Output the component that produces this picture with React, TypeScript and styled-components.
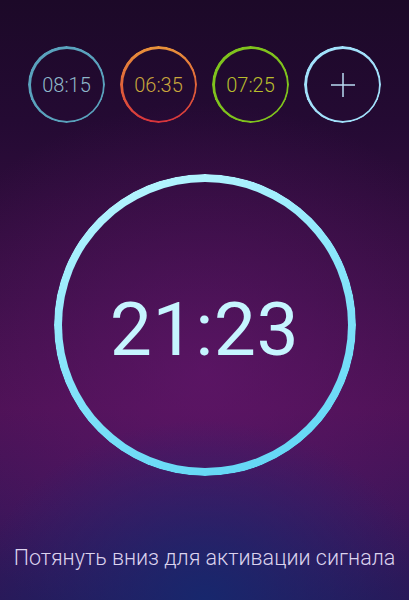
import styled, { createGlobalStyle } from "styled-components";

const GlobalStyle = createGlobalStyle`
  * { box-sizing: border-box; }
  html, body { margin: 0; padding: 0; background: #1e0a2c; }
`;

// 배경: 위는 짙은 보라, 가운데 보라 빛, 아래는 남색
const Screen = styled.div`
  width: 409px;
  height: 600px;
  overflow: hidden;
  display: flex;
  flex-direction: column;
  align-items: center;
  font-family: Roboto, "Noto Sans", sans-serif;
  background:
    radial-gradient(ellipse 55% 30% at 50% 100%, rgba(22, 40, 110, 0.95) 0%, rgba(22, 40, 110, 0) 100%),
    radial-gradient(ellipse 75% 45% at 50% 62%, rgba(110, 25, 120, 0.5) 0%, rgba(110, 25, 120, 0) 100%),
    linear-gradient(180deg, #1c0928 0%, #240a33 20%, #3a0f46 50%, #4a1152 68%, #3b1558 85%, #2a1858 100%);
`;

const AlarmRow = styled.div`
  display: flex;
  justify-content: center;
  gap: 15px;
  padding-top: 46px;
`;

const Ring = styled.div<{ $ring: string; $width: number; $size: number }>`
  position: relative;
  width: ${(p) => p.$size}px;
  height: ${(p) => p.$size}px;
  border-radius: 50%;
  display: flex;
  align-items: center;
  justify-content: center;

  &::before {
    content: "";
    position: absolute;
    inset: 0;
    border-radius: 50%;
    padding: ${(p) => p.$width}px;
    background: ${(p) => p.$ring};
    -webkit-mask: linear-gradient(#000 0 0) content-box, linear-gradient(#000 0 0);
    -webkit-mask-composite: xor;
    mask-composite: exclude;
  }
`;

const AlarmTime = styled.span<{ $color: string }>`
  font-size: 20px;
  line-height: 24px;
  font-weight: 300;
  color: ${(p) => p.$color};
  padding-top: 1px;
`;

const Dial = styled(Ring)`
  margin-top: 51px;
`;

const Clock = styled.span`
  font-size: 75px;
  line-height: 88px;
  color: #c6f5ff;
  padding-top: 7px;
  letter-spacing: 0.5px;
`;

const Hint = styled.p`
  margin: 70px 0 0;
  font-size: 21.5px;
  line-height: 24px;
  font-weight: 300;
  color: #dcd3ee;
  white-space: nowrap;
`;

const alarms = [
  { time: "08:15", ring: "#5aa2bd", color: "#8fb8ca" },
  { time: "06:35", ring: "linear-gradient(180deg, #e8923a 0%, #e0603a 55%, #d8333c 100%)", color: "#c9a63c" },
  { time: "07:25", ring: "#7fc31d", color: "#b8bd2c" },
];

export default function App() {
  return (
    <>
      <GlobalStyle />
      <Screen>
        <AlarmRow>
          {alarms.map((a) => (
            <Ring key={a.time} $ring={a.ring} $width={2.5} $size={77}>
              <AlarmTime $color={a.color}>{a.time}</AlarmTime>
            </Ring>
          ))}
          <Ring $ring="#a2e1fb" $width={2.5} $size={77}>
            <svg width="26" height="26" viewBox="0 0 26 26">
              <path d="M13 1v24M1 13h24" stroke="#b9dcf2" strokeWidth="1.5" fill="none" />
            </svg>
          </Ring>
        </AlarmRow>

        <Dial $ring="linear-gradient(160deg, #bff8ff 0%, #8ae6fb 45%, #5cd4f4 100%)" $width={8} $size={302}>
          <Clock>21:23</Clock>
        </Dial>

        <Hint>Потянуть вниз для активации сигнала</Hint>
      </Screen>
    </>
  );
}
